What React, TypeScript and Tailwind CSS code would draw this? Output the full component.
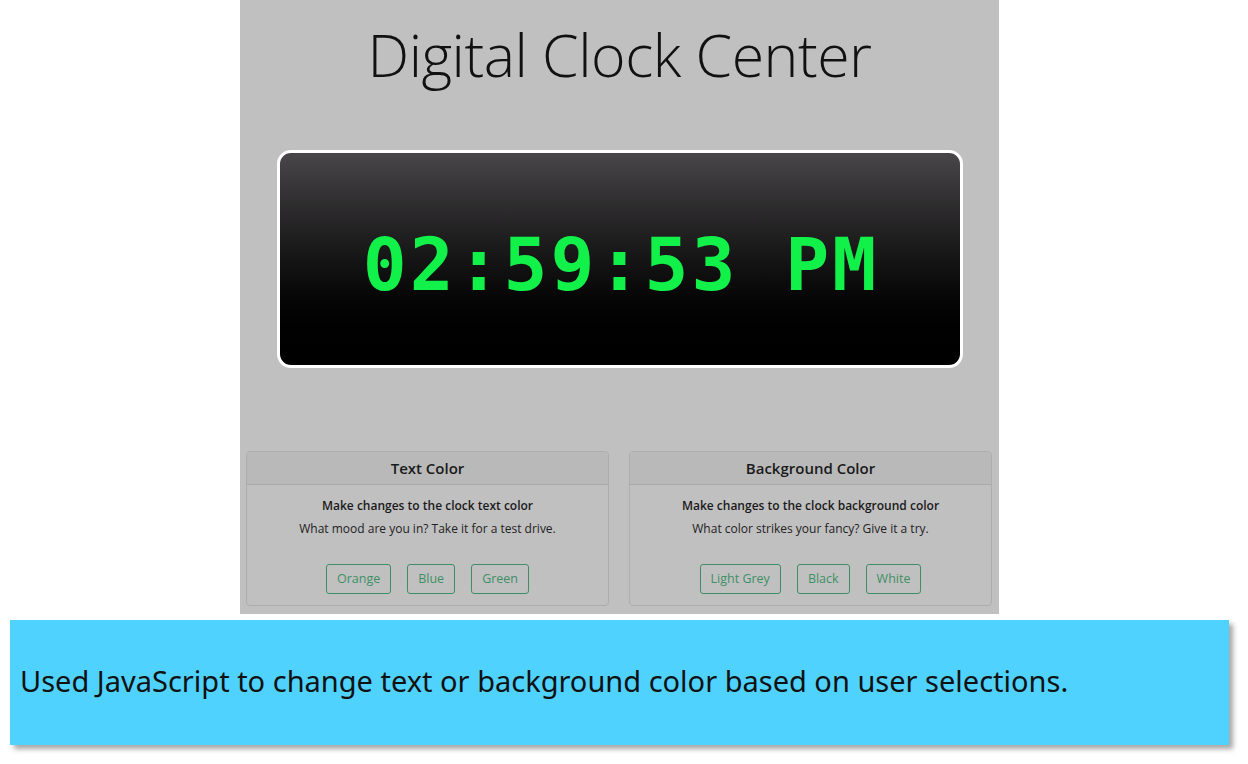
import React from "react";

function Card({ title, bold, sub, buttons }: { title: string; bold: string; sub: string; buttons: string[] }) {
  return (
    <div className="w-[363px] h-[155px] rounded-[4px] border border-[#adadad] flex flex-col overflow-hidden">
      <div className="h-[33px] bg-[#b9b9b9] border-b border-[#a9a9a9] flex items-center justify-center text-[15px] font-semibold text-[#1a1a1a]">
        {title}
      </div>
      <div className="flex flex-col items-center pt-[12px]">
        <div className="text-[12px] font-semibold text-[#1a1a1a] leading-[18px]">{bold}</div>
        <div className="text-[12px] text-[#222] leading-[18px] mt-[5px]">{sub}</div>
        <div className="flex gap-[16px] mt-[26px]">
          {buttons.map((b) => (
            <button
              key={b}
              className="h-[30px] px-[10px] rounded-[3px] border border-[#3f8f66] text-[#3f8f66] text-[12.5px] bg-transparent"
            >
              {b}
            </button>
          ))}
        </div>
      </div>
    </div>
  );
}

export default function App() {
  return (
    <div className="w-[1248px] h-[764px] bg-white overflow-hidden" style={{ fontFamily: '"Open Sans", "Noto Sans", sans-serif' }}>
      <div className="ml-[240px] w-[759px] h-[614px] bg-[#c0c0c0] flex flex-col items-center">
        <h1 className="mt-[18px] text-[59px] leading-[72px] font-light text-[#111] tracking-[-0.5px]" style={{ fontFamily: '"Open Sans", sans-serif', fontWeight: 300 }}>
          Digital Clock Center
        </h1>
        <div className="mt-[60px] w-[686px] h-[218px] rounded-[14px] border-[3px] border-white bg-gradient-to-b from-[#484648] to-[#000000] flex items-center justify-center">
          <span className="text-[#12f04a] text-[73px] font-bold leading-none tracking-[3px] pl-[3px] pt-[10px]" style={{ fontFamily: '"DejaVu Sans Mono", monospace' }}>
            02:59:53 PM
          </span>
        </div>
        <div className="mt-[83px] w-full flex justify-between pl-[6px] pr-[7px]">
          <Card title="Text Color" bold="Make changes to the clock text color" sub="What mood are you in? Take it for a test drive." buttons={["Orange", "Blue", "Green"]} />
          <Card title="Background Color" bold="Make changes to the clock background color" sub="What color strikes your fancy? Give it a try." buttons={["Light Grey", "Black", "White"]} />
        </div>
      </div>
      <div className="mt-[6px] ml-[10px] w-[1219px] h-[125px] bg-[#4fd2fe] shadow-[4px_4px_5px_rgba(0,0,0,0.35)] flex items-center pl-[10px] pb-[4px]">
        <span className="text-[29px] text-[#111] leading-none" style={{ fontFamily: '"Noto Sans", sans-serif' }}>
          Used JavaScript to change text or background color based on user selections.
        </span>
      </div>
    </div>
  );
}
